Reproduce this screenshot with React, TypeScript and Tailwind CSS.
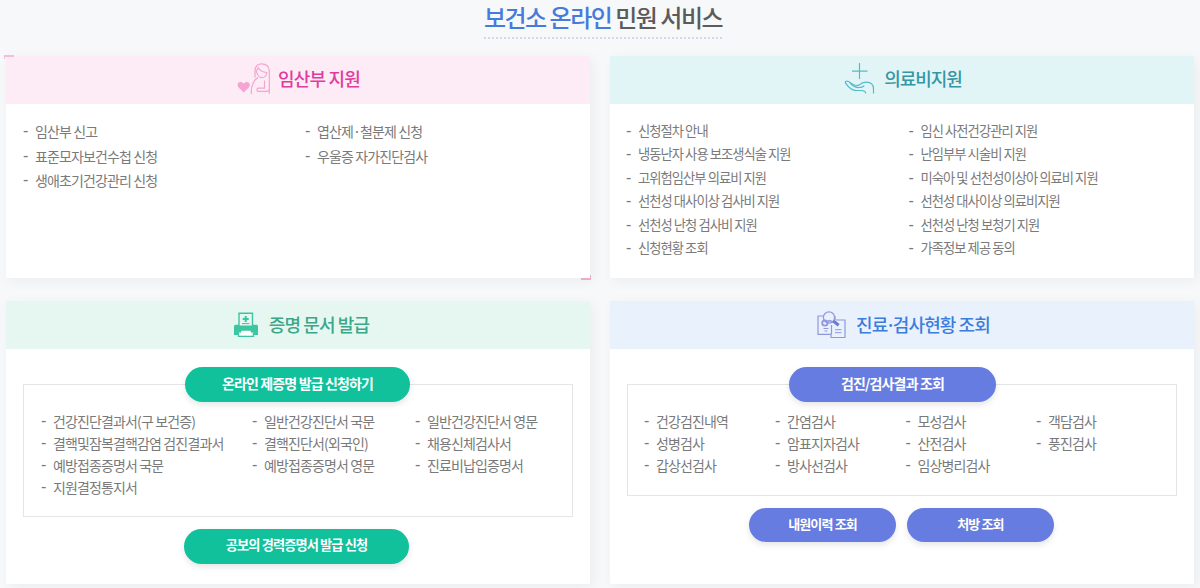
import type { ReactNode } from 'react';
import clsx from 'clsx';

interface LinkListProps {
  items: string[];
  className?: string;
}

function LinkList({ items, className }: LinkListProps) {
  return (
    <ul className={className}>
      {items.map((item) => (
        <li key={item} className="flex whitespace-nowrap">
          <span className="w-3 shrink-0 font-['Liberation_Sans',sans-serif] text-[16px]">-</span>
          <a>{item}</a>
        </li>
      ))}
    </ul>
  );
}

interface CardProps {
  title: ReactNode;
  icon: ReactNode;
  headClass: string;
  children: ReactNode;
}

function Card({ title, icon, headClass, children }: CardProps) {
  return (
    <section className="relative flex flex-col bg-white shadow-[3px_3px_12px_rgba(0,40,40,0.05)]">
      <h2
        className={clsx(
          'flex h-12 shrink-0 items-center justify-center text-[18px] leading-[45px] font-medium',
          headClass,
        )}
      >
        {icon}
        {title}
      </h2>
      {children}
    </section>
  );
}

interface PillProps {
  label: string;
  className: string;
}

function Pill({ label, className }: PillProps) {
  return (
    <button
      type="button"
      className={clsx(
        'flex items-center justify-center rounded-full pb-[3px] font-bold text-white shadow-[0_3px_6px_rgba(0,0,0,0.10)]',
        className,
      )}
    >
      {label}
    </button>
  );
}

const MotherIcon = () => (
  <svg width="34" height="34" viewBox="0 0 34 34" fill="none" stroke="#f3a6cf" strokeWidth="1.2" className="mt-px mr-[7px]">
    <path
      d="M6.7 30.6 1.4 25.2C-1.3 21.4 3.6 17.8 6.7 21.6c3.1-3.8 8-.2 5.3 3.6Z"
      fill="#f5a3d3"
      stroke="none"
    />
    <path d="M18 15.500V8.400C18 4 21 1.800 24.800 1.800s7.500 2.400 7.500 6.800V32" />
    <path d="M19.200 8.500c1 5 3.200 7.200 5.600 7.200s4.600-1.900 5-5.200c-4.100-.4-7.100-1.900-8.600-4.700-.4 1.400-.9 2.200-2 2.700Z" />
    <path d="M21 15.600c-3.200 1.400-4.200 3.700-5.200 6.400-1.100 2.600-2 5.500-1.300 10" />
    <path d="M27.500 18.500v7.700h-6c-2.100 0-2.100 3.200 0 3.200h8.600c1.300 0 1.800-.8 1.800-1.800" />
  </svg>
);

const CareIcon = () => (
  <svg width="31" height="34" viewBox="0 0 31 34" fill="none" stroke="#52bcc8" strokeWidth="1.2" className="mr-[9px]">
    <path d="M15.500 1v16M8 9.200h15.500" />
    <path d="M29.500 31.500V27c0-5.200-3.700-6.900-7.200-6.900-3.900 0-5.100.9-7.300 3-2.300.8-5.700.1-8.700-2.300-2.900-2.300-6-2-4.700.4 2.600 3.800 5.800 7 9.900 7.200l5.800.1c3.200.1 4.400.8 4.400 3" />
    <path d="M6 21c3.200 3.300 5.500 4.800 9 4.500 2.400-.1 4.300-.5 5.300-1.900" />
  </svg>
);

const PrinterIcon = () => (
  <svg width="24" height="26" viewBox="0 0 24 26" fill="none" className="mr-[11px]">
    <path d="M0 14.500c0-1 .7-1.700 1.700-1.700h20.600c1 0 1.700.7 1.700 1.700v8.600h-4.500v-3h-15v3H0Z" fill="#3cc5a1" />
    <path d="M5 14V1.200h13.500V14" fill="#e6f7f1" stroke="#3cc5a1" strokeWidth="1.4" />
    <path d="M11.700 4v6M8.700 7h6" stroke="#3cc5a1" strokeWidth="2" />
    <path d="M8 11.600h7.500" stroke="#3cc5a1" />
    <path d="M4.500 13.500h15v7h-15Z" fill="#3cc5a1" />
    <path d="M7.500 18.700h9l1.200 5H6.300Z" fill="#fff" />
    <path d="M4.500 20.500v3.800h15v-3.800" stroke="#3cc5a1" strokeWidth="1.2" />
  </svg>
);

const ExamIcon = () => (
  <svg width="29" height="28" viewBox="0 0 29 28" fill="none" stroke="#8f98dc" strokeWidth="1.2" className="mr-[10px]">
    <path d="M6.500 5H1v18.300h12.500M18 5v4" />
    <path d="M18.500 9H28v17.500H14v-4" />
    <path d="M14.500 14v9.500" />
    <circle cx="12" cy="6.500" r="5.600" />
    <circle cx="7.900" cy="12" r="2.700" strokeWidth="1.800" />
    <path d="m10.300 10.500 2.500-1 3 1.500" strokeWidth="1.500" />
    <path d="m16.200 10 5.500 4.300" stroke="#6f78cf" strokeWidth="3" />
    <path d="M6.500 17.500h5M7.500 20h3M18 18.700h6.500M18 21.700h6.500" strokeWidth="1" />
  </svg>
);

const motherLinks = [
  ['임산부 신고', '표준모자보건수첩 신청', '생애초기건강관리 신청'],
  ['엽산제·철분제 신청', '우울증 자가진단검사'],
];

const medicalLinks = [
  [
    '신청절차 안내',
    '냉동난자 사용 보조생식술 지원',
    '고위험임산부 의료비 지원',
    '선천성 대사이상 검사비 지원',
    '선천성 난청 검사비 지원',
    '신청현황 조회',
  ],
  [
    '임신 사전건강관리 지원',
    '난임부부 시술비 지원',
    '미숙아 및 선천성이상아 의료비 지원',
    '선천성 대사이상 의료비지원',
    '선천성 난청 보청기 지원',
    '가족정보 제공 동의',
  ],
];

const documentLinks = [
  ['건강진단결과서(구 보건증)', '결핵및잠복결핵감염 검진결과서', '예방접종증명서 국문', '지원결정통지서'],
  ['일반건강진단서 국문', '결핵진단서(외국인)', '예방접종증명서 영문'],
  ['일반건강진단서 영문', '채용신체검사서', '진료비납입증명서'],
];

const examLinks = [
  ['건강검진내역', '성병검사', '갑상선검사'],
  ['간염검사', '암표지자검사', '방사선검사'],
  ['모성검사', '산전검사', '임상병리검사'],
  ['객담검사', '풍진검사'],
];

export default function App() {
  return (
    <main className="h-[588px] overflow-hidden bg-[#f6f8f9] font-['Noto_Sans_CJK_KR',sans-serif] text-[14px] tracking-[-0.87px] text-[#7a7a7a]">
      <header className="flex h-14 justify-center pl-[6px]">
        <h1 className="h-[39px] border-b-2 border-dotted border-[#d3d7ea] text-[24px] leading-[33px] font-medium tracking-[-1.5px] whitespace-nowrap text-[#5b5b5b]">
          <span className="text-[#467bdc]">보건소 온라인</span> 민원 서비스
        </h1>
      </header>

      <div className="grid grid-cols-[584px_584px] grid-rows-[222px_283px] gap-x-5 gap-y-[23px] pl-[6px]">
        <Card
          title="임산부 지원"
          icon={<MotherIcon />}
          headClass="bg-[#fdecf5] pb-[3px] pl-px text-[#df3ba1] tracking-[-0.8px]"
        >
          <span className="absolute -top-px -left-[2px] h-1 w-[10px] border-t-2 border-l border-[#f2bfd3]" />
          <span className="absolute -right-px -bottom-[2px] h-[5px] w-[10px] border-r border-b-2 border-[#f2a9c6]" />
          <div className="grid grid-cols-[282px_1fr] pt-[15px] pl-[17px] leading-[24.7px]">
            {motherLinks.map((items) => (
              <LinkList key={items[0]} items={items} />
            ))}
          </div>
        </Card>

        <Card
          title="의료비지원"
          icon={<CareIcon />}
          headClass="bg-[#e2f5f6] pb-[3px] pl-[2px] text-[#3596a6] tracking-[-1.1px]"
        >
          <div className="grid grid-cols-[282.5px_1fr] pt-[15px] pl-4 text-[13.3px] leading-[23.4px] tracking-[-0.96px]">
            {medicalLinks.map((items) => (
              <LinkList key={items[0]} items={items} />
            ))}
          </div>
        </Card>

        <Card
          title="증명 문서 발급"
          icon={<PrinterIcon />}
          headClass="bg-[#e6f7f1] pb-px pl-[7px] text-[#3aa88a] tracking-[-0.9px]"
        >
          <div className="mx-[17px] mt-[35px] h-[133px] border border-[#e5e5e5]">
            <Pill label="온라인 제증명 발급 신청하기" className="-mt-[18px] ml-[161px] h-[35px] w-[225px] bg-[#10c19c]" />
            <div className="grid grid-cols-[211px_163px_1fr] pt-[7.5px] pl-[17px] leading-[22.2px]">
              {documentLinks.map((items) => (
                <LinkList key={items[0]} items={items} />
              ))}
            </div>
          </div>
          <Pill
            label="공보의 경력증명서 발급 신청"
            className="mt-3 ml-[178px] h-[35px] w-[225px] bg-[#10c19c] text-[13.2px]"
          />
        </Card>

        <Card
          title={
            <>
              진료<span className="-mx-[2px]">·</span>검사현황 조회
            </>
          }
          icon={<ExamIcon />}
          headClass="bg-[#e9f1fd] pb-px pl-[3px] text-[#3b7ddd] tracking-[-0.9px]"
        >
          <div className="mx-[17px] mt-[35px] h-[112px] border border-[#e5e5e5]">
            <Pill label="검진/검사결과 조회" className="-mt-[18px] ml-[161px] h-[35px] w-[207px] bg-[#667ce0]" />
            <div className="grid grid-cols-[131px_130.5px_130.5px_1fr] pt-[7.5px] pl-4 leading-[22.2px]">
              {examLinks.map((items) => (
                <LinkList key={items[0]} items={items} />
              ))}
            </div>
          </div>
          <div className="mt-3 ml-[139px] flex gap-[11px]">
            <Pill label="내원이력 조회" className="h-[34px] w-[147px] bg-[#667ce0] text-[13px]" />
            <Pill label="처방 조회" className="h-[34px] w-[147px] bg-[#667ce0] text-[13px]" />
          </div>
        </Card>
      </div>
    </main>
  );
}
